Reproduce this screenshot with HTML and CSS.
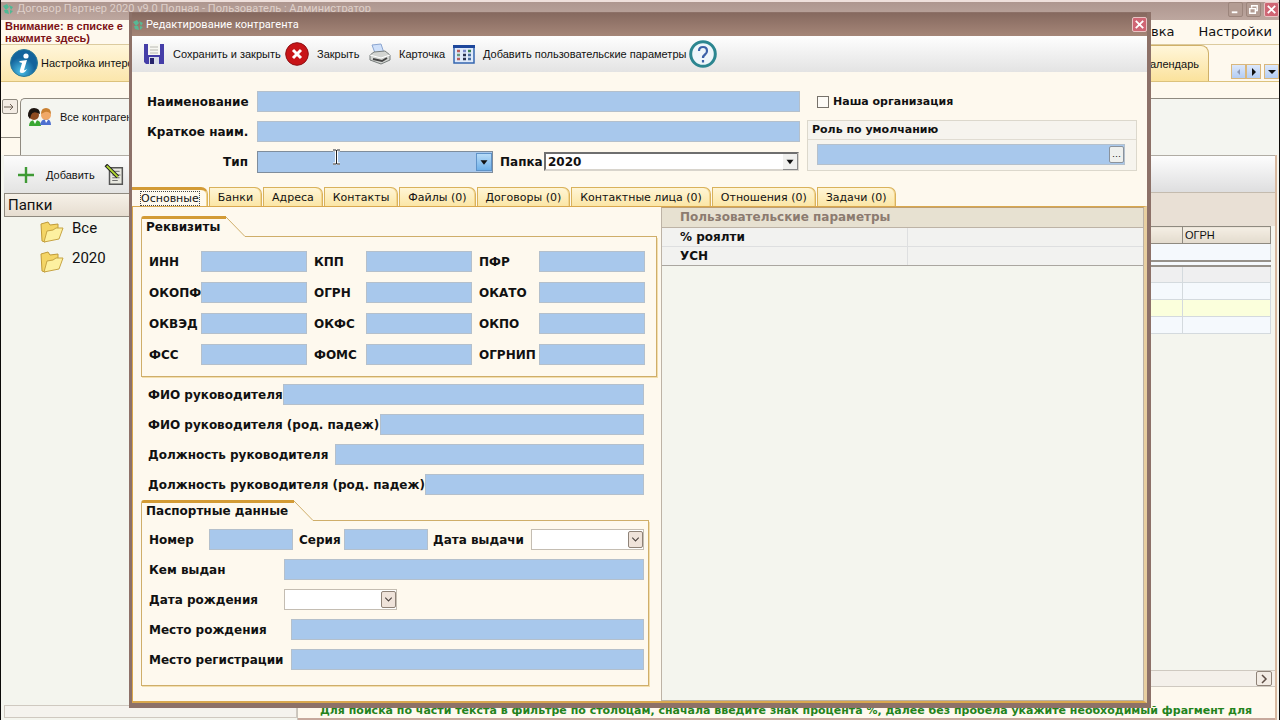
FILE: index.html
```html
<!DOCTYPE html>
<html lang="ru">
<head>
<meta charset="utf-8">
<title>Договор Партнер 2020</title>
<link rel="stylesheet" href="styles.css">
</head>
<body>
<div class="app">
  <header class="app-title">
    <svg class="logo" viewBox="0 0 12 12"><path d="M1 3l4-2 2 3-3 3zM7 2l4 2-2 3zM2 7l4 0 1 4-4-1zM8 7l3 1-3 3z" fill="#4fb894"/></svg>
    <span class="app-name">Договор Партнер 2020 v9.0 Полная - Пользователь : Администратор</span>
    <button class="win-btn" aria-label="Свернуть"><svg viewBox="0 0 14 14"><path d="M3 10h6" stroke="#fff" stroke-width="2"/></svg></button>
    <button class="win-btn" aria-label="Восстановить"><svg viewBox="0 0 14 14"><path d="M5 5V3h6v5H9M3 6h6v5H3z" fill="none" stroke="#fff" stroke-width="1.5"/></svg></button>
    <button class="win-btn close" aria-label="Закрыть программу"><svg viewBox="0 0 14 14"><path d="M3 3l8 8M11 3l-8 8" stroke="#fff" stroke-width="2"/></svg></button>
  </header>
  <div class="menubar">
    <a class="warning" href="#">Внимание: в списке е<br>нажмите здесь)</a>
    <nav class="menu"><a href="#">Справка</a><a href="#">Настройки</a></nav>
  </div>
  <div class="ribbon">
    <button class="ribbon-item">
      <svg class="info" viewBox="0 0 28 28"><defs><radialGradient id="ib" cx=".4" cy=".8"><stop offset="0" stop-color="#4cc0e8"/><stop offset="1" stop-color="#14649c"/></radialGradient></defs><circle cx="14" cy="14" r="13.5" fill="url(#ib)" stroke="#2c7c98"/><circle cx="16" cy="7" r="2.6" fill="#fff"/><path d="M10 12l7-1-3 10q0 1 3-1-2 4-5 4-3 0-2-3l2-7-3-1z" fill="#fff"/></svg>
      <span>Настройка интерфейса</span>
    </button>
    <span class="grow"></span>
    <button class="calendar-tab">Календарь</button>
    <div class="scrollers">
      <button aria-label="Назад"><svg viewBox="0 0 8 8"><path d="M5 1v6L2 4z" fill="#8d99b5"/></svg></button>
      <button aria-label="Вперёд"><svg viewBox="0 0 8 8"><path d="M2 0v8l4-4z" fill="#111"/></svg></button>
      <button class="apart" aria-label="Список вкладок"><svg viewBox="0 0 8 8"><path d="M0 2h8L4 6z" fill="#111"/></svg></button>
    </div>
  </div>
  <div class="view-tabs">
    <div class="handle"><button aria-label="Развернуть панель"><svg viewBox="0 0 12 12"><path d="M1 6h9M7 3l3 3-3 3" fill="none" stroke="#6d6055"/></svg></button></div>
    <button class="view-tab">
      <svg class="people" viewBox="0 0 24 20"><path d="M1 19q0-6 6-6t6 6z" fill="#39a833"/><path d="M12 18q1-6 6-6 5 0 5 6z" fill="#4d6fd0"/><circle cx="6" cy="8" r="5" fill="#8d4a20"/><path d="M0 9Q0 1 6 1t6 6Q5 3 3 8l-1 4z" fill="#1c1410"/><circle cx="18" cy="8" r="5" fill="#f0a868"/><path d="M13 7q0-6 5-6t5 6q-3-3-6-2z" fill="#c98032"/><path d="M5 13l2 4 2-4M17 13l1 3 2-3" fill="#fff"/></svg>
      <span>Все контрагенты</span>
    </button>
  </div>
  <div class="panes">
    <aside class="side">
      <div class="side-tools">
        <button class="tool"><svg class="i16" viewBox="0 0 16 16"><path d="M8 0v16M0 8h16" stroke="#3f9a35" stroke-width="2.4"/></svg>Добавить</button>
        <button class="tool" aria-label="Изменить"><svg class="i22" viewBox="0 0 22 24"><path d="M5 4h14v18H5z" fill="#e8e8e0" stroke="#555" stroke-width="1.6"/><path d="M8 8h8M8 12h9M8 15h8M8 18h6" stroke="#666"/><path d="M1 1l13 13" stroke="#222" stroke-width="4"/><path d="M2 2l12 12" stroke="#b4dc30" stroke-width="2"/></svg></button>
      </div>
      <h2 class="side-head">Папки</h2>
      <ul class="tree">
        <li><svg class="folder" viewBox="0 0 24 22"><path d="M1 3l7-2 2 3 8-1v6l-13 12-3-1z" fill="#f4d566" stroke="#c09a38"/><path d="M4 21L7 10l6-1 3-2 7 0-4 11z" fill="#fdf0a0" stroke="#c7a443"/></svg>Все</li>
        <li><svg class="folder" viewBox="0 0 24 22"><path d="M1 3l7-2 2 3 8-1v6l-13 12-3-1z" fill="#f4d566" stroke="#c09a38"/><path d="M4 21L7 10l6-1 3-2 7 0-4 11z" fill="#fdf0a0" stroke="#c7a443"/></svg>2020</li>
      </ul>
      <div class="side-scroll"></div>
    </aside>
    <main class="list">
      <div class="list-tools"></div>
      <div class="group-bar"></div>
      <table class="grid">
        <colgroup><col><col class="c-ogrn"></colgroup>
        <thead><tr><th></th><th>ОГРН</th></tr></thead>
        <tbody>
          <tr class="filter"><td colspan="2"></td></tr>
          <tr class="rule"><td colspan="2"></td></tr>
          <tr class="group"><td></td><td></td></tr>
          <tr><td></td><td></td></tr>
          <tr class="alt"><td></td><td></td></tr>
          <tr><td></td><td></td></tr>
        </tbody>
      </table>
      <div class="rest"></div>
      <div class="hscroll"><button aria-label="Прокрутить вправо"><svg viewBox="0 0 10 10"><path d="M3 1l4 4-4 4" fill="none" stroke="#5d4d44" stroke-width="1.5"/></svg></button></div>
      <p class="hint">Для поиска по части текста в фильтре по столбцам, сначала введите знак процента %, далее без пробела укажите необходимый фрагмент для</p>
    </main>
  </div>
</div>

<div class="dialog" role="dialog" aria-labelledby="dlg-title">
  <header class="dlg-title">
    <svg class="logo" viewBox="0 0 12 12"><path d="M1 3l4-2 2 3-3 3zM7 2l4 2-2 3zM2 7l4 0 1 4-4-1zM8 7l3 1-3 3z" fill="#58b894"/></svg>
    <h1 id="dlg-title">Редактирование контрагента</h1>
    <button class="win-btn close" aria-label="Закрыть окно"><svg viewBox="0 0 14 14"><path d="M3 3l8 8M11 3l-8 8" stroke="#fff" stroke-width="2"/></svg></button>
  </header>
  <div class="dlg-tools">
    <button class="t-save"><svg class="i22" viewBox="0 0 22 22"><path d="M1 1h20v20H3l-2-2z" fill="#453ea8"/><path d="M5 1h12v11H5z" fill="#f7f7f2"/><path d="M7 4h8M7 7h8M7 10h8" stroke="#b9b9b2"/><path d="M6 14h10v7H6z" fill="#d8dce8"/><path d="M7 15h4v6H7z" fill="#27246c"/></svg><span>Сохранить и закрыть</span></button>
    <button class="t-close"><svg class="i24" viewBox="0 0 24 24"><circle cx="12" cy="12" r="11.3" fill="#c81418" stroke="#8c1014"/><path d="M8 8l8 8M16 8l-8 8" stroke="#fff" stroke-width="3"/></svg><span>Закрыть</span></button>
    <button class="t-card"><svg class="i22" viewBox="0 0 22 22"><path d="M3 2l9-1 3 9H6z" fill="#cfe0fa" stroke="#8ba5d0"/><path d="M1 12l4-3 11-1 5 4v5l-9 4-11-4z" fill="#d3d5d2" stroke="#777d7c"/><path d="M1 12l11 3 9-3" fill="none" stroke="#fff"/><path d="M4 16l9 2 5-3" fill="none" stroke="#444" stroke-width="2"/></svg><span>Карточка</span></button>
    <button class="t-params"><svg class="i22" viewBox="0 0 22 20"><path d="M1 2h20v17H1z" fill="#dfeafa" stroke="#3566b0" stroke-width="1.5"/><path d="M0 1h22v3H0z" fill="#1d479c"/><path d="M4 7h3M4 15h3" stroke="#b85c5c" stroke-width="2.500"/><path d="M4 11h3" stroke="#6b9a7c" stroke-width="2.500"/><path d="M10 7h3" stroke="#7a88c8" stroke-width="2.500"/><path d="M10 11h3M10 15h3" stroke="#2c3450" stroke-width="2.500"/><path d="M15 7h3" stroke="#3c8050" stroke-width="2.500"/><path d="M15 11h3M15 15h3" stroke="#4a6ea0" stroke-width="2.500"/></svg><span>Добавить пользовательские параметры</span></button>
    <button class="t-help" aria-label="Справка"><svg class="i28" viewBox="0 0 28 28"><circle cx="14" cy="14" r="12.3" fill="#eef6fa" stroke="#2c8690" stroke-width="3"/><path d="M10 11q0-4 4-4t4 4q0 2-2 3.500T14 18M14 20v2.500" fill="none" stroke="#3c62a8" stroke-width="2.200"/></svg></button>
  </div>

  <form class="dlg-form">
    <div class="main-fields">
      <div class="row"><label for="name">Наименование</label><input type="text" id="name"></div>
      <div class="row"><label for="short">Краткое наим.</label><input type="text" id="short"></div>
      <div class="row pickers">
        <label class="to-right" for="type">Тип</label>
        <span class="combo type"><select id="type"><option></option></select><svg class="arrow glossy" viewBox="0 0 16 18"><path d="M4 7h8l-4 5z" fill="#111"/></svg>
          <svg class="caret" viewBox="0 0 9 16"><path d="M1 1h3M5 1h3M1 15h3M5 15h3M4.500 2v12" stroke="#fff" stroke-width="3"/><path d="M1 1h3M5 1h3M1 15h3M5 15h3M4.500 1v14" stroke="#222"/></svg></span>
        <label class="tight" for="folder">Папка</label>
        <span class="combo classic"><select id="folder"><option>2020</option></select><svg class="arrow grey" viewBox="0 0 16 16"><path d="M4 6h8l-4 5z" fill="#111"/></svg></span>
      </div>
    </div>
    <div class="org">
      <label class="check"><input type="checkbox">Наша организация</label>
      <section class="role">
        <h2><label for="role">Роль по умолчанию</label></h2>
        <div class="role-body"><input type="text" id="role"><button type="button" aria-label="Выбрать роль">…</button></div>
      </section>
    </div>
  </form>

  <div class="tabs" role="tablist">
    <button class="tab active" role="tab" aria-selected="true"><span>Основные</span></button>
    <button class="tab" role="tab">Банки</button>
    <button class="tab" role="tab">Адреса</button>
    <button class="tab" role="tab">Контакты</button>
    <button class="tab" role="tab">Файлы (0)</button>
    <button class="tab" role="tab">Договоры (0)</button>
    <button class="tab" role="tab">Контактные лица (0)</button>
    <button class="tab" role="tab">Отношения (0)</button>
    <button class="tab" role="tab">Задачи (0)</button>
  </div>

  <div class="page" role="tabpanel">
    <div class="left">
      <section class="box">
        <header><h2>Реквизиты</h2><svg class="slope" viewBox="0 0 20 21"><path d="M0 1L19 20.500H20" fill="none" stroke="#cfae6a"/></svg></header>
        <div class="box-body codes">
          <label for="inn">ИНН</label><input type="text" id="inn"><label for="kpp">КПП</label><input type="text" id="kpp"><label for="pfr">ПФР</label><input type="text" id="pfr">
          <label for="okopf">ОКОПФ</label><input type="text" id="okopf"><label for="ogrn">ОГРН</label><input type="text" id="ogrn"><label for="okato">ОКАТО</label><input type="text" id="okato">
          <label for="okved">ОКВЭД</label><input type="text" id="okved"><label for="okfs">ОКФС</label><input type="text" id="okfs"><label for="okpo">ОКПО</label><input type="text" id="okpo">
          <label for="fss">ФСС</label><input type="text" id="fss"><label for="foms">ФОМС</label><input type="text" id="foms"><label for="ogrnip">ОГРНИП</label><input type="text" id="ogrnip">
        </div>
      </section>
      <div class="head-fields">
        <div class="row"><label class="w-fio" for="fio">ФИО руководителя</label><input type="text" id="fio"></div>
        <div class="row"><label class="w-fio-gen" for="fiog">ФИО руководителя (род. падеж)</label><input type="text" id="fiog"></div>
        <div class="row"><label class="w-post" for="post">Должность руководителя</label><input type="text" id="post"></div>
        <div class="row"><label class="w-post-gen" for="postg">Должность руководителя (род. падеж)</label><input type="text" id="postg"></div>
      </div>
      <section class="box passport">
        <header><h2>Паспортные данные</h2><svg class="slope" viewBox="0 0 20 21"><path d="M0 1L19 20.500H20" fill="none" stroke="#cfae6a"/></svg></header>
        <div class="box-body">
          <div class="row id-row">
            <label class="w-num" for="num">Номер</label><input type="text" id="num">
            <label class="w-ser" for="ser">Серия</label><input type="text" id="ser">
            <label class="w-issued" for="issued">Дата выдачи</label><span class="combo date"><select id="issued"><option></option></select><svg class="arrow pink" viewBox="0 0 14 16"><path d="M3.500 6L7 9.500 10.500 6" fill="none" stroke="#4d4440" stroke-width="1.200"/></svg></span>
          </div>
          <div class="row"><label class="w-by" for="by">Кем выдан</label><input type="text" id="by"></div>
          <div class="row"><label class="w-by" for="born">Дата рождения</label><span class="combo date"><select id="born"><option></option></select><svg class="arrow pink" viewBox="0 0 14 16"><path d="M3.500 6L7 9.500 10.500 6" fill="none" stroke="#4d4440" stroke-width="1.200"/></svg></span></div>
          <div class="row"><label class="w-place" for="place">Место рождения</label><input type="text" id="place"></div>
          <div class="row"><label class="w-place" for="reg">Место регистрации</label><input type="text" id="reg"></div>
        </div>
      </section>
    </div>
    <div class="params">
      <table>
        <colgroup><col class="c-name"><col></colgroup>
        <thead><tr><th colspan="2">Пользовательские параметры</th></tr></thead>
        <tbody>
          <tr><th>% роялти</th><td></td></tr>
          <tr><th>УСН</th><td></td></tr>
        </tbody>
      </table>
    </div>
  </div>
</div>
</body>
</html>
```
FILE: styles.css
```css
* { box-sizing: border-box; }

html, body { height: 100%; margin: 0; }

body {
  position: relative;
  overflow: hidden;
  background: #fef9ee;
  color: #111;
  font: 11px/16px "Liberation Sans", Arial, sans-serif;
}

button, input, select { font: inherit; color: inherit; margin: 0; }
button { padding: 0; border: 0; background: none; white-space: nowrap; }
h1, h2, p, ul { margin: 0; padding: 0; }
svg { display: block; flex: none; }
a { color: inherit; text-decoration: none; }
table { border-collapse: collapse; table-layout: fixed; width: 100%; }

/* Main application window */
.app {
  display: flex;
  flex-direction: column;
  height: 100%;
  border: solid #0b0908;
  border-width: 0 1px;
}

.app-title {
  display: flex;
  align-items: center;
  gap: 3px;
  height: 20px;
  padding: 0 0 4px 1px;
  border-top: 2px solid #efe0dc;
  background: linear-gradient(#ae968f, #bda79f);
  color: #dfd0ca;
  font: 11px/14px Roboto, sans-serif;
}
.app-name { flex: 1; }
.logo { width: 12px; height: 12px; }

.win-btn {
  width: 15px;
  height: 15px;
  border: 1px solid #9c857c;
  border-radius: 2px;
  background: #b39c93;
}
.win-btn svg { width: 13px; height: 13px; }
.win-btn.close { border-color: #e8c4c4; background: #cf6674; }

.menubar {
  display: flex;
  justify-content: space-between;
  height: 25px;
  padding-left: 4px;
  border-bottom: 1px solid #dccb9e;
}
.warning { color: #7c1216; font: bold 11px/12px "Liberation Sans", Arial, sans-serif; }
.menu { display: flex; gap: 24px; padding: 4px 7px 0 0; font: 13px/16px "DejaVu Sans", sans-serif; }

.ribbon {
  display: flex;
  height: 37px;
  border-bottom: 1px solid #dcc27c;
}
.ribbon-item {
  display: flex;
  align-items: center;
  gap: 3px;
  width: 860px;
  padding-left: 9px;
  background: linear-gradient(#fff6da, #fbe6ac);
}
.info { width: 28px; height: 28px; }
.grow { flex: 1; }
.calendar-tab {
  width: 80px;
  padding-right: 9px;
  border: 1px solid #cfb069;
  border-bottom: 0;
  border-top-right-radius: 8px;
  background: linear-gradient(#fff6da, #fbe29c);
  text-align: right;
}
.scrollers { display: flex; align-items: flex-end; width: 70px; padding: 0 0 2px 22px; }
.scrollers button {
  display: grid;
  place-items: center;
  width: 15px;
  height: 15px;
  border: 1px solid #d9b77c;
  background: linear-gradient(#dce8fc, #b4cdf3);
}
.scrollers svg { width: 8px; height: 8px; }
.scrollers .apart { margin-left: 3px; }

.view-tabs { display: flex; height: 73px; padding-top: 16px; }
.handle {
  width: 19px;
  height: 40px;
  padding: 1px;
  border-bottom: 1px solid #8f8a80;
}
.handle button {
  width: 16px;
  height: 15px;
  border: 1px solid #8f8a80;
  border-radius: 2px;
  background: #f3ece4;
}
.handle svg { width: 12px; height: 12px; }
.view-tab {
  display: flex;
  align-items: flex-start;
  gap: 8px;
  flex: 1;
  padding: 8px 0 0 7px;
  border: 1px solid #8f8a80;
  border-width: 1px 0 0 1px;
  border-top-left-radius: 5px;
  background: #f4f5f0;
}
.view-tab span { padding-top: 2px; }
.people { width: 24px; height: 20px; }

.panes { display: flex; flex: 1; min-height: 0; padding-left: 3px; background: #f4f5ee; }

.side {
  display: flex;
  flex-direction: column;
  width: 294px;
  border-right: 1px solid #c9c5bc;
}
.side-tools {
  display: flex;
  align-items: center;
  gap: 9px;
  height: 38px;
  padding-left: 14px;
  border-top: 1px solid #b0aca4;
  background: linear-gradient(#fcfcfc, #e3e3e2);
}
.tool { display: flex; align-items: center; gap: 12px; }
.i16 { width: 16px; height: 16px; }
.i22 { width: 22px; height: 22px; }
.i24 { width: 24px; height: 24px; }
.i28 { width: 28px; height: 28px; }
.side-head {
  height: 24px;
  padding-left: 3px;
  border: 1px solid #8f8a80;
  background: linear-gradient(#f6f1e8, #e6ddd0);
  font: 15px/22px Roboto, sans-serif;
}
.tree {
  flex: 1;
  list-style: none;
  font: 15px/22px Roboto, sans-serif;
  padding: 0 0 0 36px;
}
.tree li { display: flex; align-items: flex-start; gap: 8px; height: 30px; }
.folder { width: 24px; height: 22px; margin-top: 4px; }
.side-scroll { height: 13px; margin-bottom: 2px; border: 1px solid #cfc9c0; background: #f5f3ee; }

.list {
  display: flex;
  flex: 1;
  flex-direction: column;
  min-width: 0;
  margin-right: 2px;
  border-right: 2px solid #d8b9a0;
}
.list-tools { height: 37px; border-top: 1px solid #b0aca4; background: linear-gradient(#fdfdfd, #dededf); }
.group-bar { height: 34px; border-top: 1px solid #c4bbae; background: #e9e0d5; }
.grid { width: calc(100% - 4px); }
.c-ogrn { width: 88px; }
.grid th {
  height: 17px;
  padding: 0 2px;
  border: 1px solid #8f8a80;
  background: linear-gradient(#f4eee4, #e3dbcd);
  font-weight: normal;
  line-height: 16px;
  text-align: left;
}
.grid td { height: 17px; padding: 0; border: 1px solid #d4dade; background: #f5f9fd; }
.grid .rule td { height: 5px; border: solid #96918a; border-width: 2px 0; }
.grid .group td { background: #efeff0; }
.grid .alt td { background: #fbffdc; }
.rest { flex: 1; }
.hscroll {
  display: flex;
  justify-content: flex-end;
  height: 17px;
  padding-right: 3px;
  border: 1px solid #cfc9c0;
  border-width: 1px 0;
  background: #f4f0ea;
}
.hscroll button {
  width: 16px;
  height: 15px;
  padding: 2px;
  border: 1px solid #8f8378;
  border-radius: 2px;
  background: #f3ece4;
}
.hscroll svg { width: 10px; height: 10px; }
.hint {
  height: 33px;
  padding: 15px 0 0 22px;
  border-bottom: 2px solid #c7a99c;
  background: #fef9ee;
  color: #23831c;
  font: bold 11px/18px "DejaVu Sans", sans-serif;
  white-space: nowrap;
}

/* Counterparty dialog */
.dialog {
  position: absolute;
  inset: 12px 129px;
  display: flex;
  flex-direction: column;
  border: solid #8d7168;
  border-width: 1px 4px 5px 3px;
  background: #fef9ee;
  font: bold 12px/16px "DejaVu Sans", sans-serif;
}
.dlg-title {
  display: flex;
  align-items: center;
  gap: 2px;
  height: 23px;
  background: linear-gradient(#86695f, #a58678);
  color: #fff;
}
.dlg-title h1 { flex: 1; font: 11px/16px Roboto, sans-serif; }

.dlg-tools {
  display: flex;
  align-items: center;
  height: 36px;
  padding-left: 11px;
  background: linear-gradient(#fefefe, #e3e3e3);
  font: 11px/16px "Liberation Sans", Arial, sans-serif;
}
.dlg-tools button { display: flex; align-items: center; gap: 8px; }
.t-save { width: 142px; }
.t-close { width: 84px; }
.t-card { width: 84px; }
.t-params { width: 236px; }

input[type="text"] {
  flex: 1;
  min-width: 0;
  height: 21px;
  padding: 0 4px;
  border: 1px solid #b4c0cc;
  border-radius: 0;
  background: #a8c8ec;
}
.row { display: flex; align-items: center; height: 21px; }
.row label { flex: none; white-space: nowrap; }

.combo { position: relative; display: flex; height: 21px; }
.combo select {
  width: 100%;
  padding: 0 3px;
  border: 1px solid #c4bdb2;
  border-radius: 0;
  background: #fff;
  appearance: none;
}
.arrow { position: absolute; right: 1px; top: 2px; bottom: 2px; pointer-events: none; }
.pink { width: 15px; height: 17px; border: 1px solid #8f8378; border-radius: 2px; background: #efe3da; }
.glossy { width: 16px; height: 18px; border: 1px solid #5f93c8; background: linear-gradient(#b8dcf8, #6fb0e8); }
.grey { width: 15px; height: 16px; border: solid #8a8a8a; border-width: 0 1px 1px 0; background: #f0f0ee; }
.caret { position: absolute; left: 75px; top: -2px; width: 9px; height: 16px; }

.dlg-form { display: flex; height: 115px; padding: 19px 10px 0 15px; gap: 7px; }
.main-fields { display: flex; flex: 1; flex-direction: column; gap: 9px; }
.main-fields .row > label:first-child { width: 110px; }
.main-fields .to-right { padding-right: 9px; text-align: right; }
.main-fields .tight { width: 51px; padding-left: 7px; }
.type { width: 236px; height: 22px; }
.type select { border-color: #7f8d9c; background: #a8c8ec; }
.classic { flex: 1; height: 19px; margin-right: 1px; }
.classic select { border: 2px solid; border-color: #6f6f6f #d8d4cc #d8d4cc #6f6f6f; padding: 0 2px; }

.org { display: flex; flex-direction: column; width: 330px; gap: 7px; }
.check { display: flex; align-items: center; gap: 4px; height: 22px; padding-left: 10px; font-size: 11px; }
.check input { width: 12px; height: 12px; margin: 0; border: 1px solid #77726a; background: #fdfbf6; appearance: none; }
.role { border: 1px solid #dcd8cc; background: #f6f4ee; }
.role h2 { height: 19px; padding-left: 4px; border-bottom: 1px solid #e0dcd2; font: bold 11px/18px "DejaVu Sans", sans-serif; }
.role-body { position: relative; display: flex; padding: 4px 11px 5px 9px; }
.role-body button {
  position: absolute;
  right: 12px;
  top: 6px;
  width: 15px;
  height: 17px;
  border: 1px solid #8a929c;
  border-radius: 2px;
  background: #eef0ee;
  font-size: 9px;
  font-weight: normal;
  line-height: 9px;
}

.tabs { display: flex; gap: 1px; height: 19px; }
.tab {
  padding: 1px 8px 0;
  border: 1px solid #d9b25c;
  border-bottom: 0;
  border-top-right-radius: 7px;
  background: linear-gradient(#fff5d6, #fbe6a6);
  box-shadow: inset -1px 0 #f4d58c;
  font: 11px/16px "DejaVu Sans", sans-serif;
  white-space: nowrap;
}
.tab.active { padding: 0 8px 0 9px; border-top: 3px solid #d39b35; border-left: 0; background: #fef9ee; }
.tab.active span { display: block; outline: 1px dotted #444; line-height: 13px; }

.page {
  display: flex;
  flex: 1;
  min-height: 0;
  border: solid #d9a84e;
  border-width: 1px 0 2px 1px;
  border-right: 3px solid #e8cfa0;
}
.left { width: 528px; padding: 9px 4px 0 8px; }
.box header { display: flex; height: 21px; }
.box h2 {
  height: 21px;
  padding: 0 6px 0 4px;
  border: solid #cfae6a;
  border-width: 0 0 0 1px;
  border-top: 3px solid #d39b35;
  border-top-left-radius: 3px;
  font: bold 12px/16px "DejaVu Sans", sans-serif;
}
.slope { width: 20px; height: 21px; }
.box header::after { content: ""; flex: 1; border-bottom: 1px solid #cfae6a; }
.box-body { border: solid #cfae6a; border-width: 0 1px 1px; box-shadow: 1px 1px #f3dfae; }
.codes {
  display: grid;
  grid-template-columns: 52px 1fr 59px 1fr 67px 1fr;
  row-gap: 10px;
  align-items: center;
  padding: 14px 11px 11px 7px;
}
.codes label { white-space: nowrap; }
.codes label:nth-of-type(3n+2), .codes label:nth-of-type(3n) { padding-left: 7px; }
.head-fields { display: flex; flex-direction: column; gap: 9px; padding: 7px 13px 5px 7px; }
.w-fio { width: 135px; }
.w-fio-gen { width: 232px; }
.w-post { width: 187px; }
.w-post-gen { width: 277px; }
.passport { margin-right: 8px; }
.passport .box-body { display: flex; flex-direction: column; gap: 9px; padding: 8px 4px 15px 7px; }
.w-num { width: 60px; }
.w-ser { width: 51px; padding-left: 6px; }
.w-issued { width: 103px; padding-left: 5px; }
.w-by { width: 135px; }
.w-place { width: 142px; }
.date { width: 113px; }

.params { flex: 1; border: 1px solid #bdb3a6; border-top-color: #bf9f70; background: #f4f5ee; }
.c-name { width: 245px; }
.params th, .params td { height: 19px; padding: 0 18px; border-bottom: 1px solid #dedfe0; background: #f2f2f0; text-align: left; }
.params tbody th { border-right: 1px solid #dedfe0; }
.params thead th { border-color: #bdb3a6; background: #e7e1d1; color: #8c7b70; }
.params tbody tr:last-child > * { border-bottom-color: #aaa6a0; }
```
